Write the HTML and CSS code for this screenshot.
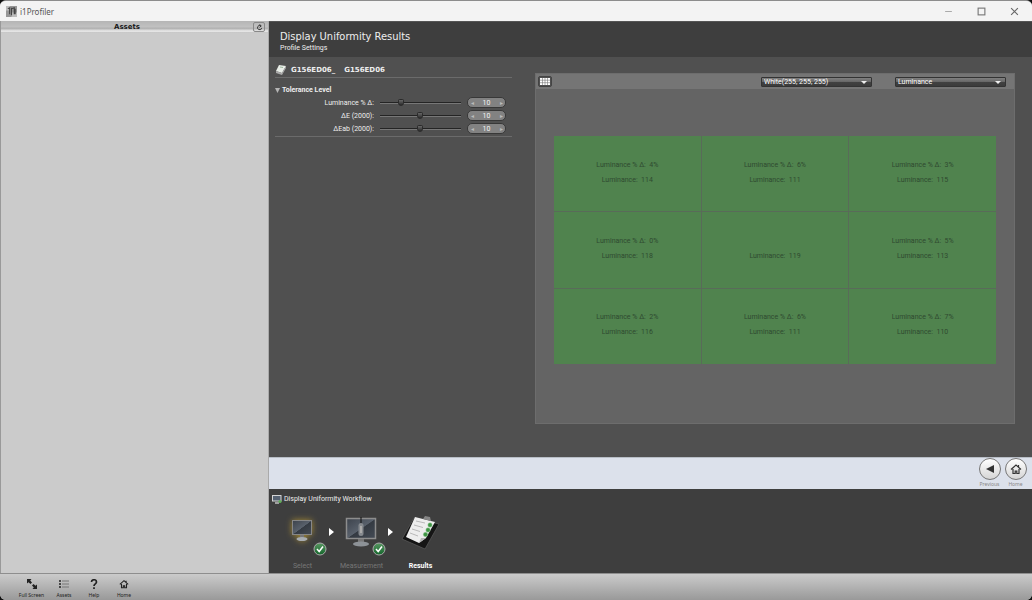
FILE: index.html
```html
<!DOCTYPE html>
<html lang="en">
<head>
<meta charset="utf-8">
<title>i1Profiler</title>
<link rel="stylesheet" href="styles.css">
</head>
<body>
<div class="window">
  <header class="titlebar">
    <svg class="app-icon" viewBox="0 0 12 12"><rect width="12" height="12" fill="#969696"/><path d="M0 0h4v5H0zM6 7h6v5H6z" fill="#bcbcbc"/><path d="M2 3l2-1v7M6 2v8M6 3l3-1v7M10 3v6" stroke="#444" stroke-width="1.200" fill="none"/></svg>
    <span class="app-name">i1Profiler</span>
    <div class="window-buttons">
      <button aria-label="Minimize"><svg viewBox="0 0 8 8"><path d="M1 4h6" stroke="#aaa"/></svg></button>
      <button aria-label="Maximize"><svg viewBox="0 0 8 8"><rect x="1" y="1" width="6" height="6" fill="none" stroke="#777"/></svg></button>
      <button aria-label="Close"><svg viewBox="0 0 8 8"><path d="M1 1l6 6M7 1l-6 6" stroke="#666"/></svg></button>
    </div>
  </header>

  <div class="body">
    <aside class="sidebar">
      <div class="sidebar-head">
        <h2>Assets</h2>
        <button class="refresh" aria-label="Refresh"><svg viewBox="0 0 8 8"><path d="M5.600 2.200A2.400 2.400 0 1 0 6.500 4.500M4 .4L6 2.200 4 3.800" fill="none" stroke="#333" stroke-width="1.100"/></svg></button>
      </div>
    </aside>

    <main class="main">
      <div class="page-head">
        <h1>Display Uniformity Results</h1>
        <p>Profile Settings</p>
      </div>

      <div class="content">
        <section class="settings">
          <div class="device">
            <svg class="device-icon" viewBox="0 0 12 10"><path d="M4 0l7 1-4 7-6-2z" fill="#e9eee8"/><path d="M1 6l6 2v2L1 8zM7 8l4-7v2L7 10z" fill="#aaa"/><path d="M5 2l3 .5" stroke="#9cb69c"/></svg>
            <span>G156ED06_</span><span>G156ED06</span>
          </div>
          <h3><svg class="disclosure" viewBox="0 0 6 6"><path d="M0 0h6L3 6z" fill="#b5b5b5"/></svg>Tolerance Level</h3>
          <div class="tolerances">
            <div class="tolerance">
              <label for="lum">Luminance % Δ:</label>
              <input type="range" id="lum" min="0" max="100" value="24">
              <div class="spinner"><button aria-label="Decrease luminance">◂</button><input type="text" aria-label="Luminance value" value="10"><button aria-label="Increase luminance">▸</button></div>
            </div>
            <div class="tolerance">
              <label for="de">ΔE (2000):</label>
              <input type="range" id="de" min="0" max="100" value="49">
              <div class="spinner"><button aria-label="Decrease ΔE">◂</button><input type="text" aria-label="ΔE value" value="10"><button aria-label="Increase ΔE">▸</button></div>
            </div>
            <div class="tolerance">
              <label for="deab">ΔEab (2000):</label>
              <input type="range" id="deab" min="0" max="100" value="49">
              <div class="spinner"><button aria-label="Decrease ΔEab">◂</button><input type="text" aria-label="ΔEab value" value="10"><button aria-label="Increase ΔEab">▸</button></div>
            </div>
          </div>
        </section>

        <section class="panel">
          <div class="panel-bar">
            <button class="grid-button" aria-label="Grid view"><svg viewBox="0 0 10 7"><rect width="10" height="7" fill="#fff"/><path d="M0 2.200h10M0 4.700h10M2.500 0v7M5 0v7M7.500 0v7" stroke="#777" stroke-width=".6"/></svg></button>
            <div class="select-wrap"><select aria-label="Color"><option>White(255, 255, 255)</option></select></div>
            <div class="select-wrap"><select aria-label="Measure"><option>Luminance</option></select></div>
          </div>
          <div class="cells">
            <div class="cell"><p>Luminance % Δ:&nbsp; 4%</p><p>Luminance:&nbsp; 114</p></div>
            <div class="cell"><p>Luminance % Δ:&nbsp; 6%</p><p>Luminance:&nbsp; 111</p></div>
            <div class="cell"><p>Luminance % Δ:&nbsp; 3%</p><p>Luminance:&nbsp; 115</p></div>
            <div class="cell"><p>Luminance % Δ:&nbsp; 0%</p><p>Luminance:&nbsp; 118</p></div>
            <div class="cell"><p></p><p>Luminance:&nbsp; 119</p></div>
            <div class="cell"><p>Luminance % Δ:&nbsp; 5%</p><p>Luminance:&nbsp; 113</p></div>
            <div class="cell"><p>Luminance % Δ:&nbsp; 2%</p><p>Luminance:&nbsp; 116</p></div>
            <div class="cell"><p>Luminance % Δ:&nbsp; 6%</p><p>Luminance:&nbsp; 111</p></div>
            <div class="cell"><p>Luminance % Δ:&nbsp; 7%</p><p>Luminance:&nbsp; 110</p></div>
          </div>
        </section>
      </div>

      <nav class="nav">
        <button class="nav-button"><span class="disc"><svg viewBox="0 0 12 12"><path d="M10 2v8L2 6z" fill="#333"/></svg></span>Previous</button>
        <button class="nav-button"><span class="disc"><svg viewBox="0 0 12 12"><path d="M1 6.500L6 2l5 4.500M8.500 2v2M3 6v4.500h2.200V8h1.600v2.500H9V6" fill="none" stroke="#333" stroke-width="1.200"/></svg></span>Home</button>
      </nav>

      <section class="workflow">
        <h2><svg class="workflow-icon" viewBox="0 0 10 9"><rect x=".5" y=".5" width="8.500" height="5.500" fill="#566272" stroke="#d5d5d5"/><path d="M3 8h4" stroke="#ccc" stroke-width="1.400"/><circle cx="8" cy="6.500" r="1.600" fill="#5eae59"/></svg>Display Uniformity Workflow</h2>
        <ol class="steps">
          <li class="step">
            <div class="art">
              <svg class="picture glow" viewBox="0 0 40 36"><defs><linearGradient id="screen" x2="1" y2="1"><stop offset="0" stop-color="#3c424b"/><stop offset=".5" stop-color="#59616c"/><stop offset=".52" stop-color="#343a42"/><stop offset="1" stop-color="#444b55"/></linearGradient><linearGradient id="green" x2="0" y2="1"><stop offset="0" stop-color="#5a9863"/><stop offset="1" stop-color="#12652a"/></linearGradient></defs><rect x="9.500" y="5.500" width="19" height="14" fill="url(#screen)" stroke="#878787"/><path d="M17 20h4v3h-4z" fill="#777"/><ellipse cx="19" cy="24" rx="5.500" ry="2" fill="#a8adb2"/></svg>
              <svg class="tick" viewBox="0 0 14 14"><circle cx="7" cy="7" r="6" fill="url(#green)" stroke="#aaa"/><path d="M4 7l2.200 2.500L10 4.500" fill="none" stroke="#fff" stroke-width="1.500"/></svg>
            </div>
            <span>Select</span>
          </li>
          <li class="arrow"><svg viewBox="0 0 6 8"><path d="M0 0l5 4-5 4z" fill="#fff"/></svg></li>
          <li class="step">
            <div class="art">
              <svg class="picture" viewBox="0 0 40 36"><rect x="4.500" y="3.500" width="29" height="20" fill="url(#screen)" stroke="#8d8d8d" stroke-width="1.500"/><path d="M16 24h6v4h-6z" fill="#777"/><ellipse cx="19" cy="29" rx="8" ry="2.500" fill="#8d9297"/><path d="M19 2v8" stroke="#111"/><rect x="16.500" y="8" width="5" height="13" rx="2.500" fill="#85898e"/><path d="M18 11h2v7h-2z" fill="#aaa"/></svg>
              <svg class="tick" viewBox="0 0 14 14"><circle cx="7" cy="7" r="6" fill="url(#green)" stroke="#aaa"/><path d="M4 7l2.200 2.500L10 4.500" fill="none" stroke="#fff" stroke-width="1.500"/></svg>
            </div>
            <span>Measurement</span>
          </li>
          <li class="arrow"><svg viewBox="0 0 6 8"><path d="M0 0l5 4-5 4z" fill="#fff"/></svg></li>
          <li class="step current">
            <div class="art">
              <svg class="picture" viewBox="0 0 40 36"><path d="M13 3l25 6-14 25L1 24z" fill="#151515" stroke="#5c5c5c" stroke-width=".7"/><path d="M14 2l20 5-9 16-7 5L5 22z" fill="#ededed"/><path d="M18 28l2-5 5 0z" fill="#b5b5b5"/><path d="M22 4l2-3 5 1 1 4z" fill="#858585"/><path d="M15 6l9 2M13 10l9 2.500M11 14l8 2.500M9 18l8 3" stroke="#aaa" stroke-width=".8"/><g fill="#3d9442" stroke="#9ccb9e" stroke-width=".5"><circle cx="29" cy="10" r="2.200"/><circle cx="27" cy="15" r="2.200"/><circle cx="24.500" cy="19.500" r="2.200"/></g></svg>
            </div>
            <span>Results</span>
          </li>
        </ol>
      </section>
    </main>
  </div>

  <footer class="footer">
    <button><svg viewBox="0 0 10 10"><path d="M0 0h4.500L3.200 1.500 5 3.500 3.500 5 1.500 3.200 0 4.500zM10 10H5.500l1.300-1.500L5 6.500 6.500 5l2 1.800L10 5.500z" fill="#222"/></svg>Full Screen</button>
    <button><svg viewBox="0 0 10 10"><path d="M0 2h2M0 5h2M0 8h2" stroke="#222" stroke-width="1.400"/><path d="M3 2h7M3 5h7M3 8h7" stroke="#777"/></svg>Assets</button>
    <button><svg viewBox="0 0 10 10"><path d="M2.500 3c0-3 5-3 5 0 0 2-2.500 1.700-2.500 4M5 8.200V10" fill="none" stroke="#222" stroke-width="1.700"/></svg>Help</button>
    <button><svg viewBox="0 0 12 12"><path d="M1 6.500L6 2l5 4.500M8.500 2v2M3 6v4.500h2.200V8h1.600v2.500H9V6" fill="none" stroke="#222" stroke-width="1.300"/></svg>Home</button>
  </footer>
</div>
</body>
</html>
```
FILE: styles.css
```css
* { box-sizing: border-box; }
body, h1, h2, h3, p, ol { margin: 0; padding: 0; }
html { background: #111; }
body { font-family: Roboto, "Noto Sans", sans-serif; font-size: 7px; color: #eee; }
button { border: 0; padding: 0; background: none; font: inherit; color: inherit; }
svg { display: block; flex: none; }
.window { display: flex; flex-direction: column; min-height: 100vh; border-top: 1px solid #8c8c8c; border-radius: 6px; overflow: hidden; background: #c9c9c9; }

.titlebar { display: flex; align-items: center; height: 20px; padding: 0 13px 0 6px; gap: 3px; background: #f3f3f3; color: #555; font-family: "Noto Sans", sans-serif; font-size: 8px; }
.app-icon { width: 11px; height: 11px; }
.window-buttons { display: flex; gap: 24px; margin-left: auto; }
.window-buttons svg { width: 9px; height: 9px; }

.body { display: flex; flex: 1; }
.sidebar { width: 269px; flex: none; background: #cbcbcb; border-left: 1px solid #999; border-right: 1px solid #aaa; }
.sidebar-head { display: flex; align-items: center; height: 12px; padding-right: 3px; background: linear-gradient(#b5b5b5, #c1c1c1 50%, #adadad 60%, #ececec 85%, #bbb); color: #181818; }
.sidebar-head h2 { flex: 1; text-align: center; font: bold 7px/12px "DejaVu Sans", sans-serif; }
.refresh { display: grid; place-items: center; width: 12px; height: 10px; border: 1px solid #888; border-radius: 2px; }
.refresh svg { width: 7px; height: 7px; }

.main { display: flex; flex: 1; flex-direction: column; min-width: 0; background: #3e3e3e; }
.page-head { height: 36px; padding: 8px 11px 0; border-top: 1px solid #555; background: #3e3e3e; }
.page-head h1 { font: 400 11px/13px "DejaVu Sans Condensed", "Noto Sans", sans-serif; }
.page-head p { line-height: 11px; }

.content { display: flex; flex: 1; gap: 23px; padding: 6px 17px 33px 6px; background: #505050; }
.settings { width: 237px; flex: none; }
.device { display: flex; align-items: center; gap: 9px; height: 15px; border-bottom: 1px solid #6b6b6b; font: bold 7px/10px "DejaVu Sans", sans-serif; }
.device-icon { width: 12px; height: 10px; margin-right: -5px; }
.settings h3 { display: flex; align-items: center; gap: 2px; margin-top: 7px; font-size: 7px; line-height: 10px; }
.disclosure { width: 5px; height: 5px; }
.tolerances { padding: 1px 6px 1px 0; border-bottom: 1px solid #6b6b6b; }
.tolerance { display: grid; grid-template-columns: 99px 1fr 39px; gap: 6px; align-items: center; height: 13px; }
.tolerance label { text-align: right; white-space: nowrap; }
input[type="range"] { appearance: none; width: 100%; height: 9px; margin: 0; background: none; }
input[type="range"]::-webkit-slider-runnable-track { height: 2px; border-top: 1px solid #242424; border-bottom: 1px solid #777; }
input[type="range"]::-webkit-slider-thumb { appearance: none; width: 6px; height: 7px; margin-top: -4px; border: 1px solid #2a2a2a; border-radius: 2px 2px 4px 4px; background: linear-gradient(#666, #2c2c2c); }
.spinner { display: flex; align-items: center; height: 11px; border: 1px solid #383838; border-radius: 5px; background: #828282; }
.spinner button { width: 8px; color: #bbb; font-size: 6px; line-height: 8px; }
.spinner input { flex: 1; min-width: 0; height: 9px; padding: 0; border: 0; background: none; color: #f4f4f4; font: inherit; text-align: center; }

.panel { display: flex; flex: 1; flex-direction: column; min-width: 0; margin-top: 10px; border: 1px solid #6d6d6d; background: #646464; }
.panel-bar { display: flex; align-items: center; height: 15px; padding: 0 8px 0 2px; background: #757575; }
.grid-button { display: grid; place-items: center; width: 14px; height: 11px; margin-right: auto; border: 1px solid #444; border-radius: 2px; background: #505050; }
.grid-button svg { width: 10px; height: 7px; }
.select-wrap { position: relative; width: 111px; margin-left: 23px; }
.select-wrap::after { content: ""; position: absolute; top: 4px; right: 5px; border: 3px solid transparent; border-top-color: #eee; border-bottom: 0; pointer-events: none; }
select { display: block; appearance: none; width: 100%; height: 10px; padding: 0 2px; border: 1px solid #333; border-radius: 1px; background: linear-gradient(#808080, #686868 45%, #414141 55%, #3b3b3b); color: #fff; font: inherit; line-height: 8px; }
.cells { display: grid; flex: 1; grid-template-columns: repeat(3, 1fr); grid-auto-rows: 1fr; gap: 1px; margin: 47px 18px 59px; background: #596b59; }
.cell { display: flex; flex-direction: column; justify-content: center; gap: 5px; padding-bottom: 3px; background: #50834e; color: #2f4a30; text-align: center; }
.cell p { height: 10px; line-height: 10px; }

.nav { display: flex; justify-content: flex-end; gap: 1px; height: 32px; padding-right: 4px; border-top: 1px solid #b8bec6; background: #dce1eb; color: #888; font-family: "Noto Sans", sans-serif; font-size: 5px; }
.nav-button { display: flex; flex-direction: column; align-items: center; width: 25px; line-height: 8px; }
.disc { display: grid; place-items: center; width: 22px; height: 22px; border: 1px solid #777; border-radius: 50%; background: linear-gradient(#fff, #d5d5d5); }
.disc svg { width: 12px; height: 12px; }

.workflow { height: 84px; padding: 5px 3px; background: #3e3e3e; }
.workflow h2 { display: flex; align-items: center; gap: 2px; font-size: 7px; font-weight: 400; line-height: 10px; }
.workflow-icon { width: 10px; height: 9px; }
.steps { display: flex; padding: 11px 0 0 4px; list-style: none; }
.step { display: flex; flex-direction: column; align-items: center; width: 53px; color: #777; line-height: 10px; }
.art { position: relative; width: 40px; height: 46px; }
.picture { width: 40px; height: 36px; }
.glow { filter: drop-shadow(0 0 3px #a58a35); }
.tick { position: absolute; right: -4px; top: 27px; width: 14px; height: 14px; }
.arrow { width: 6px; padding-top: 13px; }
.arrow svg { width: 6px; height: 8px; }
.current { color: #fff; font-weight: 700; }

.footer { display: flex; height: 27px; padding: 5px 0 0 14px; border-top: 1px solid #8e8e8e; background: linear-gradient(#cbcbcb, #999); color: #222; font-family: "Noto Sans", sans-serif; font-size: 5px; }
.footer button { display: flex; flex-direction: column; align-items: center; gap: 2px; width: 30px; line-height: 8px; white-space: nowrap; }
.footer button:first-child { width: 35px; }
.footer svg { width: 10px; height: 10px; }
```
